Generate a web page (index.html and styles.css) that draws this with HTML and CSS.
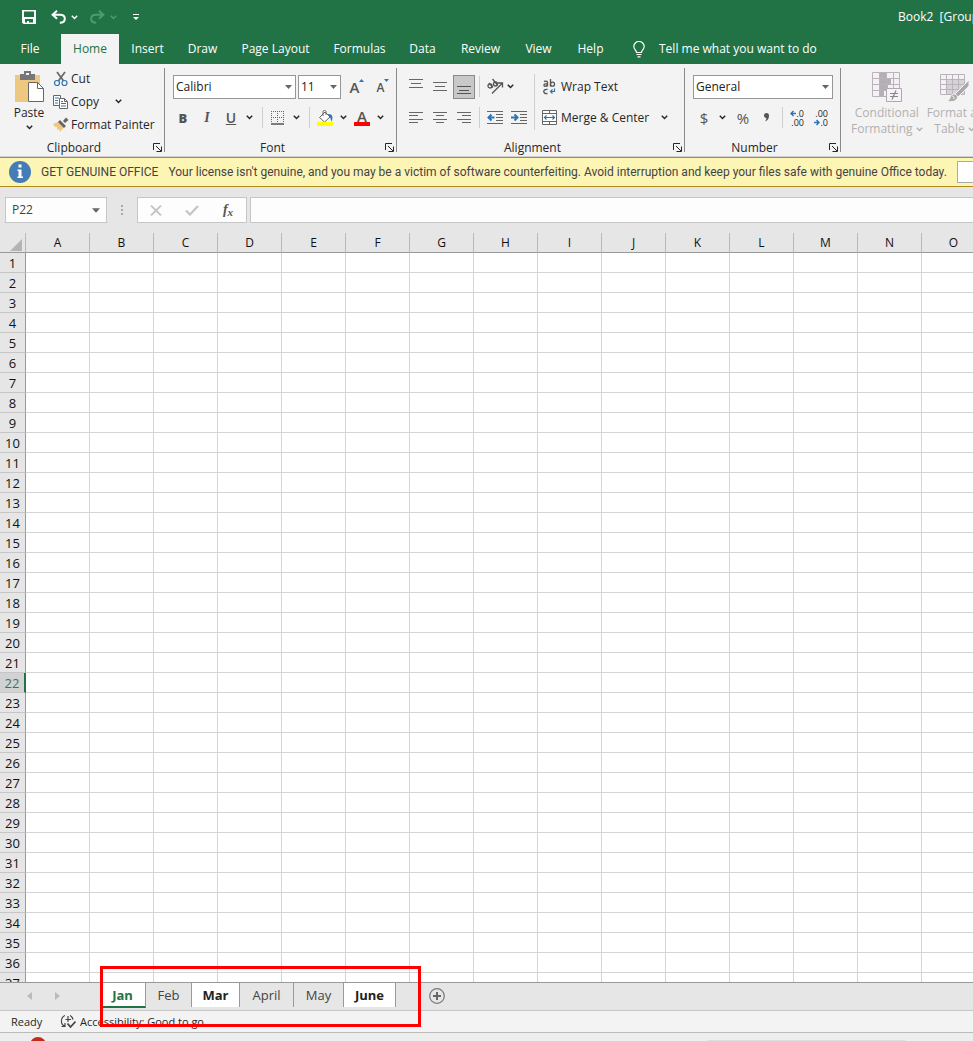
FILE: index.html
```html
<!DOCTYPE html>
<html lang="en">
<head>
<meta charset="utf-8">
<title>Book2 [Group]</title>
<link rel="stylesheet" href="styles.css">
</head>
<body>
<svg class="defs" aria-hidden="true">
  <symbol id="chev" viewBox="0 0 7 5"><path d="M.8 .8 3.5 3.5 6.2 .8" fill="none" stroke="currentColor" stroke-width="1.5"/></symbol>
  <symbol id="caret" viewBox="0 0 7 4"><path d="M0 0h7L3.500 4z" fill="currentColor"/></symbol>
  <symbol id="launch" viewBox="0 0 9 9"><path d="M.5 7V.5H7M3 3l5 5M8.500 3.500v5h-5" fill="none" stroke="currentColor"/></symbol>
</svg>

<header class="title-bar">
  <button class="qa qa-save" aria-label="Save"><svg width="14" height="14" viewBox="0 0 14 14"><path d="M0 0h14v14H1.500L0 12.500z" fill="#fff"/><path d="M2 1.500h10V7H2zM3 9h8v3.500H7V11H5v1.500H3z" fill="#217346"/></svg></button>
  <button class="qa" aria-label="Undo"><svg width="15" height="14" viewBox="0 0 15 14"><path d="M6 .8 1.600 4.800 6 8.800M2 4.800h7c3 0 4.800 1.600 4.800 4 0 2.500-2 4-5 4" fill="none" stroke="#fff" stroke-width="2"/></svg></button>
  <button class="qa-more" aria-label="Undo list"><svg width="7" height="5"><use href="#chev"/></svg></button>
  <button class="qa qa-off" aria-label="Redo"><svg width="15" height="14" viewBox="0 0 15 14"><path d="M9 .8l4.400 4L9 8.800M13 4.800H6c-3 0-4.800 1.600-4.800 4 0 2.500 2 4 5 4" fill="none" stroke="currentColor" stroke-width="2"/></svg></button>
  <button class="qa-more qa-off" aria-label="Redo list"><svg width="7" height="5"><use href="#chev"/></svg></button>
  <button class="qa" aria-label="Customize toolbar"><svg width="7" height="7" viewBox="0 0 7 7"><path d="M0 0h6v1H0zM0 3h6L3 6z" fill="#fff"/></svg></button>
  <h1 class="doc-title">Book2&nbsp; [Group]</h1>
</header>

<nav class="tabs">
  <button class="tab">File</button>
  <button class="tab tab-on">Home</button>
  <button class="tab">Insert</button>
  <button class="tab">Draw</button>
  <button class="tab">Page Layout</button>
  <button class="tab">Formulas</button>
  <button class="tab">Data</button>
  <button class="tab">Review</button>
  <button class="tab">View</button>
  <button class="tab">Help</button>
  <button class="tab tell"><svg width="12" height="17" viewBox="0 0 12 17"><path d="M3.500 11.500C3.500 9 .8 8.500.8 5.500a5.200 5 0 0 1 10.400 0c0 3-2.700 3.500-2.700 6zM3.500 13.500h5M4.500 15.800h3" fill="none" stroke="#fff" stroke-width="1.200"/></svg>Tell me what you want to do</button>
</nav>

<section class="ribbon" aria-label="Home ribbon">
  <div class="group clip">
    <div class="group-body">
      <button class="big paste"><svg width="32" height="32" viewBox="0 0 32 32"><path d="M2 4h25v27H2z" fill="#eec880"/><path d="M7 3h4V0h7v3h4v6H7z" fill="#777"/><path d="M13 2h3v2h-3z" fill="#f3f3f3"/><path d="M15.500 11.500h9l6 6v13h-15z" fill="#fff" stroke="#666"/><path d="M24.500 11.500v6h6" fill="none" stroke="#666"/></svg><span>Paste</span><svg width="7" height="5"><use href="#chev"/></svg></button>
      <div class="clip-list">
        <button class="cmd"><svg width="16" height="16" viewBox="0 0 16 16"><path d="M4 1l7 9.500M12 1 5 10.500" stroke="#666" stroke-width="1.700"/><g fill="#f3f3f3" stroke="#2e75b6" stroke-width="1.200"><circle cx="4" cy="12" r="2.500"/><circle cx="11.500" cy="12" r="2.500"/></g></svg><span>Cut</span></button>
        <button class="cmd"><svg width="16" height="16" viewBox="0 0 16 16"><path d="M.5 1.500h7v10h-7z" fill="#fff" stroke="#666"/><path d="M6.500 4.500h5l3 3v7h-8z" fill="#fff" stroke="#666"/><path d="M11.500 4.500v3h3" fill="none" stroke="#666"/><path d="M2 4h4M2 6.500h3M2 9h3M8 9.500h5M8 12h5M8 7.500h2" stroke="#2e75b6"/></svg><span>Copy</span><svg class="far" width="7" height="5"><use href="#chev"/></svg></button>
        <button class="cmd"><svg width="16" height="16" viewBox="0 0 16 16"><path d="M0 7l7-3 5 5-5 6-1-3-2 1 0-3-2 0z" fill="#eec880"/><path d="M7 3l6 6-2 2-6-6zM10 4l3-3.500 2.500 2.500L12 6z" fill="#666"/></svg><span>Format Painter</span></button>
      </div>
    </div>
    <div class="group-foot"><span>Clipboard</span><button class="launch" aria-label="Clipboard settings"><svg width="9" height="9"><use href="#launch"/></svg></button></div>
  </div>

  <div class="group font">
    <div class="group-body col">
      <div class="row boxes">
        <label class="pick pick-font"><select aria-label="Font"><option>Calibri</option></select><svg width="7" height="4"><use href="#caret"/></svg></label>
        <label class="pick pick-size"><select aria-label="Font size"><option>11</option></select><svg width="7" height="4"><use href="#caret"/></svg></label>
        <button class="ib glyph grow" aria-label="Increase font size">A<svg width="5" height="3" viewBox="0 0 5 3"><path d="M0 3h5L2.500 0z" fill="#2e75b6"/></svg></button>
        <button class="ib glyph shrink" aria-label="Decrease font size">A<svg width="5" height="3" viewBox="0 0 5 3"><path d="M0 0h5L2.500 3z" fill="#2e75b6"/></svg></button>
      </div>
      <div class="row">
        <button class="ib glyph"><b>B</b></button>
        <button class="ib glyph italic"><i>I</i></button>
        <button class="ib glyph under"><u>U</u></button>
        <button class="more" aria-label="Underline styles"><svg width="7" height="5"><use href="#chev"/></svg></button>
        <span class="sep sep-wide"></span>
        <button class="ib" aria-label="Borders"><svg width="14" height="14" viewBox="0 0 14 14"><path d="M.5 0v12M6.500 0v12M12.500 0v12M0 .5h13M0 6.500h13" stroke="#666" stroke-dasharray="1 1"/><path d="M0 13h13" stroke="#555" stroke-width="1.500"/></svg></button>
        <button class="more" aria-label="Border styles"><svg width="7" height="5"><use href="#chev"/></svg></button>
        <span class="sep sep-wide"></span>
        <button class="ib" aria-label="Fill color"><svg width="17" height="16" viewBox="0 0 17 16"><path d="M2.500 7.500 8 2l5 5-5.500 5z" fill="#fff" stroke="#666"/><path d="M6 6V1.500C6 0 9 0 9 1.500V5" fill="none" stroke="#666"/><path d="M10.500 4c5-.5 6 3 4 7.500C13.500 10 14 7 10.500 4z" fill="#2e75b6"/><path d="M0 12h16v4H0z" fill="#ff0"/></svg></button>
        <button class="more" aria-label="Fill colors"><svg width="7" height="5"><use href="#chev"/></svg></button>
        <button class="ib glyph color-a" aria-label="Font color">A</button>
        <button class="more" aria-label="Font colors"><svg width="7" height="5"><use href="#chev"/></svg></button>
      </div>
    </div>
    <div class="group-foot"><span>Font</span><button class="launch" aria-label="Font settings"><svg width="9" height="9"><use href="#launch"/></svg></button></div>
  </div>

  <div class="group align">
    <div class="group-body">
      <div class="col">
        <div class="row">
          <button class="ib" aria-label="Top align"><svg width="14" height="16" viewBox="0 0 14 16"><path d="M0 .5h14M2 4.500h10M0 8.500h14" stroke="#666"/></svg></button>
          <button class="ib" aria-label="Middle align"><svg width="14" height="16" viewBox="0 0 14 16"><path d="M0 3.500h14M2 7.500h10M0 11.500h14" stroke="#666"/></svg></button>
          <button class="ib pressed" aria-label="Bottom align" aria-pressed="true"><svg width="14" height="16" viewBox="0 0 14 16"><path d="M0 7.500h14M2 11.500h10M0 14.500h14" stroke="#555"/></svg></button>
          <span class="sep"></span>
          <button class="ib" aria-label="Orientation"><svg width="18" height="18" viewBox="0 0 18 18"><g fill="none" stroke="#555" stroke-width="1.300"><circle cx="4" cy="8" r="2"/><path d="M3 5l4 4.500M6.500 1l5 6"/><circle cx="9.500" cy="6" r="2"/><path d="M6 15.500 16 5.500M12 5h4.500v4.500"/></g></svg></button>
          <button class="more more-near" aria-label="Orientation options"><svg width="7" height="5"><use href="#chev"/></svg></button>
        </div>
        <div class="row">
          <button class="ib" aria-label="Align left"><svg width="14" height="13" viewBox="0 0 14 13"><path d="M0 1.500h14M0 4.500h9M0 8.500h14M0 11.500h9" stroke="#666"/></svg></button>
          <button class="ib" aria-label="Center"><svg width="14" height="13" viewBox="0 0 14 13"><path d="M0 1.500h14M3 4.500h8M0 8.500h14M3 11.500h8" stroke="#666"/></svg></button>
          <button class="ib" aria-label="Align right"><svg width="14" height="13" viewBox="0 0 14 13"><path d="M0 1.500h14M5 4.500h9M0 8.500h14M5 11.500h9" stroke="#666"/></svg></button>
          <span class="sep"></span>
          <button class="ib" aria-label="Decrease indent"><svg width="16" height="14" viewBox="0 0 16 14"><path d="M0 .5h16M9 3.500h7M9 6.500h7M9 9.500h7M0 12.500h16" stroke="#666"/><path d="M7.500 6.500H2M4.500 3.500l-3 3 3 3" fill="none" stroke="#2e75b6" stroke-width="2"/></svg></button>
          <button class="ib" aria-label="Increase indent"><svg width="16" height="14" viewBox="0 0 16 14"><path d="M0 .5h16M9 3.500h7M9 6.500h7M9 9.500h7M0 12.500h16" stroke="#666"/><path d="M0 6.500h6M3.500 3.500l3 3-3 3" fill="none" stroke="#2e75b6" stroke-width="2"/></svg></button>
        </div>
      </div>
      <span class="sep sep-tall"></span>
      <div class="col">
        <button class="row wide"><svg width="15" height="16" viewBox="0 0 15 16"><g fill="none" stroke="#555" stroke-width="1.300"><path d="M2 2.500c3-.8 3.500 0 3.500 1.500v3.500M5.500 4.800H3.500C1.500 5 1.500 7.300 3 7.300S5.500 6 5.500 6M8.500 0v7.500"/><circle cx="10.500" cy="5.200" r="2"/><path d="M5.500 10.500c-5-1-5 5 0 4"/></g><path d="M12.500 9.500v3H8.500M10.500 10.500l-2 2 2 2" fill="none" stroke="#2e75b6" stroke-width="1.200"/></svg><span>Wrap Text</span></button>
        <button class="row wide"><svg width="15" height="15" viewBox="0 0 15 15"><path d="M.5.500h14v14H.5zM.5 3.500h14M.5 11.500h14M7.500 0v3M7.500 12v3" fill="#fff" stroke="#666"/><path d="M2.500 7.500h10M4.500 5.500 2.500 7.500l2 2M10.500 5.500l2 2-2 2" fill="none" stroke="#2e75b6" stroke-width="1.200"/></svg><span>Merge &amp; Center</span><svg class="far far-merge" width="7" height="5"><use href="#chev"/></svg></button>
      </div>
    </div>
    <div class="group-foot"><span>Alignment</span><button class="launch" aria-label="Alignment settings"><svg width="9" height="9"><use href="#launch"/></svg></button></div>
  </div>

  <div class="group number">
    <div class="group-body col">
      <div class="row boxes">
        <label class="pick pick-number"><select aria-label="Number format"><option>General</option></select><svg width="7" height="4"><use href="#caret"/></svg></label>
      </div>
      <div class="row">
        <button class="ib glyph sign">$</button>
        <button class="more" aria-label="Currency formats"><svg width="7" height="5"><use href="#chev"/></svg></button>
        <button class="ib glyph sign sign-pct">%</button>
        <button class="ib" aria-label="Comma style"><svg width="6" height="9" viewBox="0 0 6 9"><path d="M0 2.500a2.500 2.500 0 0 1 5 0C5 5.500 4 7.500 1 8.500c1-1.500 1.500-2.500 1.300-3.500C1 5 0 4 0 2.500z" fill="#555"/></svg></button>
        <span class="sep"></span>
        <button class="ib dec" aria-label="Increase decimal"><span><svg width="6" height="7" viewBox="0 0 6 7"><path d="M6 3.500H1M3.500 1 1 3.500 3.500 6" fill="none" stroke="#2e75b6" stroke-width="1.500"/></svg>.0</span><span>.00</span></button>
        <button class="ib dec" aria-label="Decrease decimal"><span>.00</span><span><svg width="6" height="7" viewBox="0 0 6 7"><path d="M0 3.500h5M2.500 1 5 3.500 2.500 6" fill="none" stroke="#2e75b6" stroke-width="1.500"/></svg>.0</span></button>
      </div>
    </div>
    <div class="group-foot"><span>Number</span><button class="launch" aria-label="Number settings"><svg width="9" height="9"><use href="#launch"/></svg></button></div>
  </div>

  <div class="group styles">
    <div class="group-body">
      <button class="big" disabled><svg width="32" height="32" viewBox="0 0 32 32"><path d="M1.500 1.500h27v24h-27z" fill="#f6f0f6"/><path d="M8 1h7v6H8zM8 7h12v6H8zM8 13h9v6H8zM8 19h5v7H8z" fill="#b3afb3"/><path d="M1.500 1.500h27v24h-27zM1 7.500h28M1 13.500h28M1 19.500h28M8.500 1v25M15.500 1v25M22.500 1v25" fill="none" stroke="#b9b4b9"/><path d="M15.500 17.500h15v13h-15z" fill="#f8f2f8" stroke="#aaa"/><path d="M19 22.500h8M19 25.500h8M25 19.500l-4 9" stroke="#888" stroke-width="1.200"/></svg><span>Conditional<br>Formatting <svg width="7" height="5"><use href="#chev"/></svg></span></button>
      <button class="big" disabled><svg width="32" height="32" viewBox="0 0 32 32"><path d="M1.500 3.500h24v20h-24z" fill="#f6f0f6"/><path d="M8 9h18v15H8z" fill="#d6d2d6"/><path d="M1.500 3.500h24v20h-24zM1 8.500h25M1 13.500h25M1 18.500h25M7.500 3v21M13.500 3v21M19.500 3v21" fill="none" stroke="#b9b4b9"/><path d="M30 9v6L19 26l-3-3z" fill="#aaa" stroke="#f3f3f3"/><path d="M14 23c4 0 6 3 3 6-2 2-6 2-9 1 4-1 2-5 6-7z" fill="#aaa" stroke="#f3f3f3"/><path d="M13 25c2 0 3 2 1 3" fill="none" stroke="#fff"/></svg><span>Format as<br>Table <svg width="7" height="5"><use href="#chev"/></svg></span></button>
    </div>
  </div>
</section>

<section class="notice" role="alert">
  <svg width="22" height="22" viewBox="0 0 22 22"><circle cx="11" cy="11" r="11" fill="#447cb5"/><path d="M9.500 3.500h3v3h-3zM8.500 8.500h4v7H14V17H8.500v-1.500h1V10h-1z" fill="#fff"/></svg>
  <strong>GET GENUINE OFFICE</strong>
  <span class="notice-text">Your license isn't genuine, and you may be a victim of software counterfeiting. Avoid interruption and keep your files safe with genuine Office today.</span>
  <button class="notice-btn" aria-label="Get genuine Office"></button>
</section>

<section class="formula-bar">
  <div class="name-box"><input aria-label="Name box" value="P22"><button aria-label="Names"><svg width="8" height="5"><use href="#caret"/></svg></button></div>
  <svg class="grip" width="2" height="11" viewBox="0 0 2 11"><path d="M0 0h2v2H0zM0 4h2v2H0zM0 8h2v2H0z" fill="#aaa"/></svg>
  <div class="fx">
    <button aria-label="Cancel"><svg width="12" height="11" viewBox="0 0 12 11"><path d="M1 .5l10 10M11 .5l-10 10" stroke="#c4c4c4" stroke-width="1.800"/></svg></button>
    <button aria-label="Enter"><svg width="14" height="11" viewBox="0 0 14 11"><path d="M1 5.500 5 9.500 13 1" fill="none" stroke="#c4c4c4" stroke-width="2.200"/></svg></button>
    <button class="fn" aria-label="Insert function"><i>f</i><i class="fn-x">x</i></button>
  </div>
  <input class="formula" aria-label="Formula">
</section>

<main class="sheet">
  <table class="cells">
    <thead><tr id="letters"><th class="corner"><svg width="12" height="12" viewBox="0 0 12 12"><path d="M12 0v12H0z" fill="#b4b4b4"/></svg></th></tr></thead>
    <tbody id="rows"></tbody>
  </table>
</main>

<footer class="bottom">
  <nav class="sheet-bar">
    <button class="arrow" aria-label="Previous sheet"><svg width="5" height="8" viewBox="0 0 5 8"><path d="M5 0v8L0 4z" fill="#bbb"/></svg></button>
    <button class="arrow" aria-label="Next sheet"><svg width="5" height="8" viewBox="0 0 5 8"><path d="M0 0v8l5-4z" fill="#bbb"/></svg></button>
    <div class="sheet-tabs">
      <button class="st st-picked st-on">Jan</button>
      <button class="st">Feb</button>
      <button class="st st-picked">Mar</button>
      <button class="st">April</button>
      <button class="st">May</button>
      <button class="st st-picked">June</button>
      <span class="mark"></span>
    </div>
    <button class="add" aria-label="New sheet"><svg width="16" height="16" viewBox="0 0 16 16"><circle cx="8" cy="8" r="7.300" fill="none" stroke="#777" stroke-width="1.200"/><path d="M4 8h8M8 4v8" stroke="#666" stroke-width="2"/></svg></button>
  </nav>
  <div class="status">
    <span class="ready">Ready</span>
    <button class="access"><svg width="16" height="15" viewBox="0 0 16 15"><path d="M5 1.500a6 6 0 0 0 0 11M1.500 12.500H5V9M10 1.500a6 6 0 0 1 3 4M8 2v6M5.500 5.500H11" fill="none" stroke="#444" stroke-width="1.200"/><path d="M7.500 9.500l3 3.500 5-5.500" fill="none" stroke="#444" stroke-width="1.800"/></svg>Accessibility: Good to go</button>
  </div>
  <div class="desk"><svg width="16" height="4" viewBox="0 0 16 4"><circle cx="8" cy="8" r="8" fill="#c42b1c"/></svg><span class="desk-bar"></span></div>
</footer>
<script src="grid.js"></script>
</body>
</html>
```
FILE: grid.js
```js
const letters = 'ABCDEFGHIJKLMNO'.split('');
const selectedRow = 22;

const head = document.getElementById('letters');
for (const letter of letters) {
  const th = document.createElement('th');
  th.scope = 'col';
  th.textContent = letter;
  head.append(th);
}

const body = document.getElementById('rows');
for (let n = 1; n <= 37; n++) {
  const tr = document.createElement('tr');
  const th = document.createElement('th');
  th.scope = 'row';
  th.textContent = n;
  if (n === selectedRow) th.className = 'picked';
  tr.append(th);
  for (const _ of letters) tr.append(document.createElement('td'));
  body.append(tr);
}
```
FILE: styles.css
```css
* { box-sizing: border-box; }

body {
  margin: 0;
  height: 100vh;
  display: flex;
  flex-direction: column;
  overflow: hidden;
  background: #e6e6e6;
  color: #262626;
  font: 12px/16px "Open Sans", "Noto Sans", sans-serif;
}

button, input, select {
  margin: 0;
  padding: 0;
  border: 0;
  background: none;
  color: inherit;
  font: inherit;
}

svg { flex: none; display: block; }
.defs { position: absolute; width: 0; height: 0; }

/* Title bar */
.title-bar {
  flex: none;
  display: flex;
  align-items: center;
  height: 34px;
  padding-left: 17px;
  background: #217346;
  color: #fff;
}
.qa { display: flex; justify-content: center; width: 24px; }
.qa-save { margin-right: 5px; }
.qa-more { display: flex; justify-content: center; width: 9px; margin-right: 6px; }
.qa-off { color: #4f9a70; }
.doc-title {
  width: 75px;
  margin: 0 0 0 auto;
  overflow: hidden;
  white-space: nowrap;
  font: inherit;
}

/* Ribbon tabs */
.tabs {
  flex: none;
  display: grid;
  grid-template-columns: 60px 59px 57px 53px 93px 75px 51px 65px 51px 53px 1fr;
  height: 30px;
  background: #217346;
  color: #fff;
}
.tab { white-space: nowrap; }
.tab-on { margin-left: 1px; background: #f3f3f3; color: #217346; }
.tell { display: flex; align-items: center; gap: 14px; padding-left: 16px; }

/* Ribbon */
.ribbon {
  flex: none;
  display: flex;
  height: 93px;
  overflow: hidden;
  background: #f3f3f3;
  border-bottom: 1px solid #d2d2d2;
}
.group {
  position: relative;
  flex: none;
  display: flex;
  flex-direction: column;
  justify-content: space-between;
  padding-top: 7px;
}
.group::after {
  content: "";
  position: absolute;
  top: 4px;
  right: 0;
  bottom: 4px;
  width: 1px;
  background: #8a8a8a;
}
.clip { width: 165px; }
.font { width: 232px; }
.align { width: 288px; }
.number { width: 156px; }
.styles { width: 160px; }
.styles::after { display: none; }
.group-body { display: flex; }
.col { display: flex; flex-direction: column; }
.font .group-body { padding-left: 6px; }
.align .group-body, .number .group-body { padding-left: 7px; }
.group-foot {
  display: grid;
  grid-template-columns: 1fr 17px;
  align-items: center;
  height: 17px;
}
.group-foot span { text-align: center; }
.launch { padding-left: 5px; }

.row { display: flex; align-items: center; height: 31px; }
.boxes { gap: 2px; padding-left: 2px; }
.number .boxes { padding-left: 1px; }
.ib {
  display: flex;
  flex: none;
  align-items: center;
  justify-content: center;
  width: 24px;
  height: 24px;
}
.more { display: flex; justify-content: center; width: 13px; }
.more-near { width: 7px; }
.sep { width: 1px; height: 21px; margin: 0 3px; background: #cfcfcf; }
.sep-wide { margin-left: 6px; }
.sep-tall { height: 56px; margin-top: 3px; }
.glyph { color: #555; font-size: 13px; font-weight: 600; }
.under { font-size: 14px; }
.italic { font-family: "Liberation Serif", serif; font-weight: 700; font-size: 14px; }
.grow { align-items: flex-start; margin-left: 2px; font-size: 15px; line-height: 24px; }
.shrink { align-items: flex-start; font-size: 12px; line-height: 26px; }
.grow svg, .shrink svg { margin-top: 4px; }
.color-a {
  height: 17px;
  width: 16px;
  margin: 0 4px;
  border-bottom: 4px solid #f00;
  font-size: 15px;
  line-height: 12px;
}
.pressed { width: 22px; margin: 0 1px; border: 1px solid #8a8a8a; background: #c8c8c8; }
.sign { font-size: 15px; font-weight: 400; }
.sign-pct { margin-left: 2px; }
.dec {
  flex-direction: column;
  align-items: flex-end;
  padding-right: 6px;
  font-size: 9px;
  line-height: 9px;
}
.dec span { display: flex; align-items: center; }

.pick {
  display: flex;
  align-items: center;
  height: 24px;
  padding-right: 3px;
  border: 1px solid #969696;
  background: #fff;
  color: #666;
}
.pick select { appearance: none; flex: 1; min-width: 0; padding-left: 2px; color: #222; }
.pick-font { width: 123px; }
.pick-size { width: 43px; }
.pick-number { width: 140px; }

.big {
  display: flex;
  flex-direction: column;
  align-items: center;
  width: 58px;
}
.big > span { margin-top: 2px; white-space: nowrap; }
.big span svg { display: inline-block; vertical-align: middle; }
.big:disabled { width: auto; color: #b1b1b1; }
.paste { width: 53px; padding-left: 5px; }
.paste > svg:last-child { margin-top: 4px; }
.styles .group-body { gap: 4px; padding-left: 10px; }
.cmd { display: flex; align-items: center; gap: 2px; height: 23px; white-space: nowrap; }
.clip-list { flex: 1; margin-top: -4px; }
.far { margin-left: 14px; }
.far-merge { margin-left: 8px; }
.wide { gap: 4px; padding-left: 4px; white-space: nowrap; }

/* License notice */
.notice {
  flex: none;
  display: flex;
  align-items: center;
  gap: 10px;
  height: 30px;
  padding-left: 9px;
  overflow: hidden;
  border: solid #b08e1c;
  border-width: 1px 0;
  background: #fdf5b4;
  color: #444;
  font-family: Roboto, "Open Sans", sans-serif;
  white-space: nowrap;
}
.notice strong { font-weight: 400; }
.notice-btn { flex: none; width: 130px; height: 22px; border: 1px solid #ababab; background: #fff; }

/* Formula bar */
.formula-bar {
  flex: none;
  display: flex;
  align-items: center;
  height: 46px;
  padding-left: 5px;
}
.name-box, .fx, .formula { height: 26px; border: 1px solid #c6c6c6; background: #fdfdfd; }
.name-box { display: flex; width: 102px; color: #444; }
.name-box input { flex: 1; min-width: 0; padding-left: 6px; }
.name-box button { width: 20px; color: #666; }
.name-box svg { margin: auto; }
.grip { margin: 0 14px; }
.fx { display: grid; grid-template-columns: 1fr 1fr 1fr; width: 110px; margin-right: 3px; }
.fx button { display: flex; align-items: center; justify-content: center; }
.fn { color: #555; font: 700 14px/16px "Liberation Serif", serif; }
.fn-x { padding-top: 3px; font-size: 11px; }
.formula { flex: 1; min-width: 0; border-right: 0; }

/* Cells */
.sheet { flex: 1; min-height: 0; overflow: hidden; background: #fff; }
.cells { width: 986px; table-layout: fixed; border-spacing: 0; }
.cells th, .cells td {
  height: 20px;
  padding: 0;
  border: solid #d4d4d4;
  border-width: 0 1px 1px 0;
}
.cells th { background: #e6e6e6; color: #111; font-weight: 400; line-height: 18px; }
.cells thead th {
  border-color: #ababab #ababab #999;
  border-right-color: #b8b8b8;
}
.cells .corner { width: 26px; }
.corner svg { margin: 5px 0 0 10px; }
.cells tbody th { border-right-color: #999; border-bottom-color: #c6c6c6; font-size: 13px; }
.cells .picked { border-right: 2px solid #217346; background: #d2d2d2; color: #3f7358; }

/* Sheet bar */
.bottom { flex: none; }
.sheet-bar {
  display: flex;
  height: 29px;
  padding-left: 15px;
  border: solid #999;
  border-width: 1px 0;
  border-bottom-color: #c6c6c6;
}
.arrow { display: flex; align-items: center; justify-content: center; width: 28px; height: 26px; }
.sheet-tabs {
  position: relative;
  display: grid;
  grid-template-columns: 46px 46px 48px 54px 50px 52px;
  width: 321px;
  height: 25px;
  margin-left: 29px;
}
.st { height: 24px; border-right: 1px solid #999; color: #444; font-size: 13px; }
.st-picked { background: #fff; color: #222; font-weight: 700; }
.st-on { height: 25px; border-bottom: 2px solid #217346; color: #217346; }
.mark {
  position: absolute;
  inset: -17px 0 -19px;
  border: 3px solid #f00;
  pointer-events: none;
}
.add { width: 32px; height: 26px; }
.add svg { margin: auto; }

.status {
  display: flex;
  align-items: center;
  height: 22px;
  padding-left: 11px;
  border-bottom: 1px solid #bbb;
  background: #f3f3f3;
  font-size: 11px;
}
.ready { width: 49px; }
.access { display: flex; align-items: center; gap: 4px; }
.desk { display: flex; justify-content: space-between; align-items: flex-end; height: 8px; padding: 0 68px 0 30px; background: #eee; }
.desk-bar { width: 197px; height: 1px; background: #ddd; }
```
